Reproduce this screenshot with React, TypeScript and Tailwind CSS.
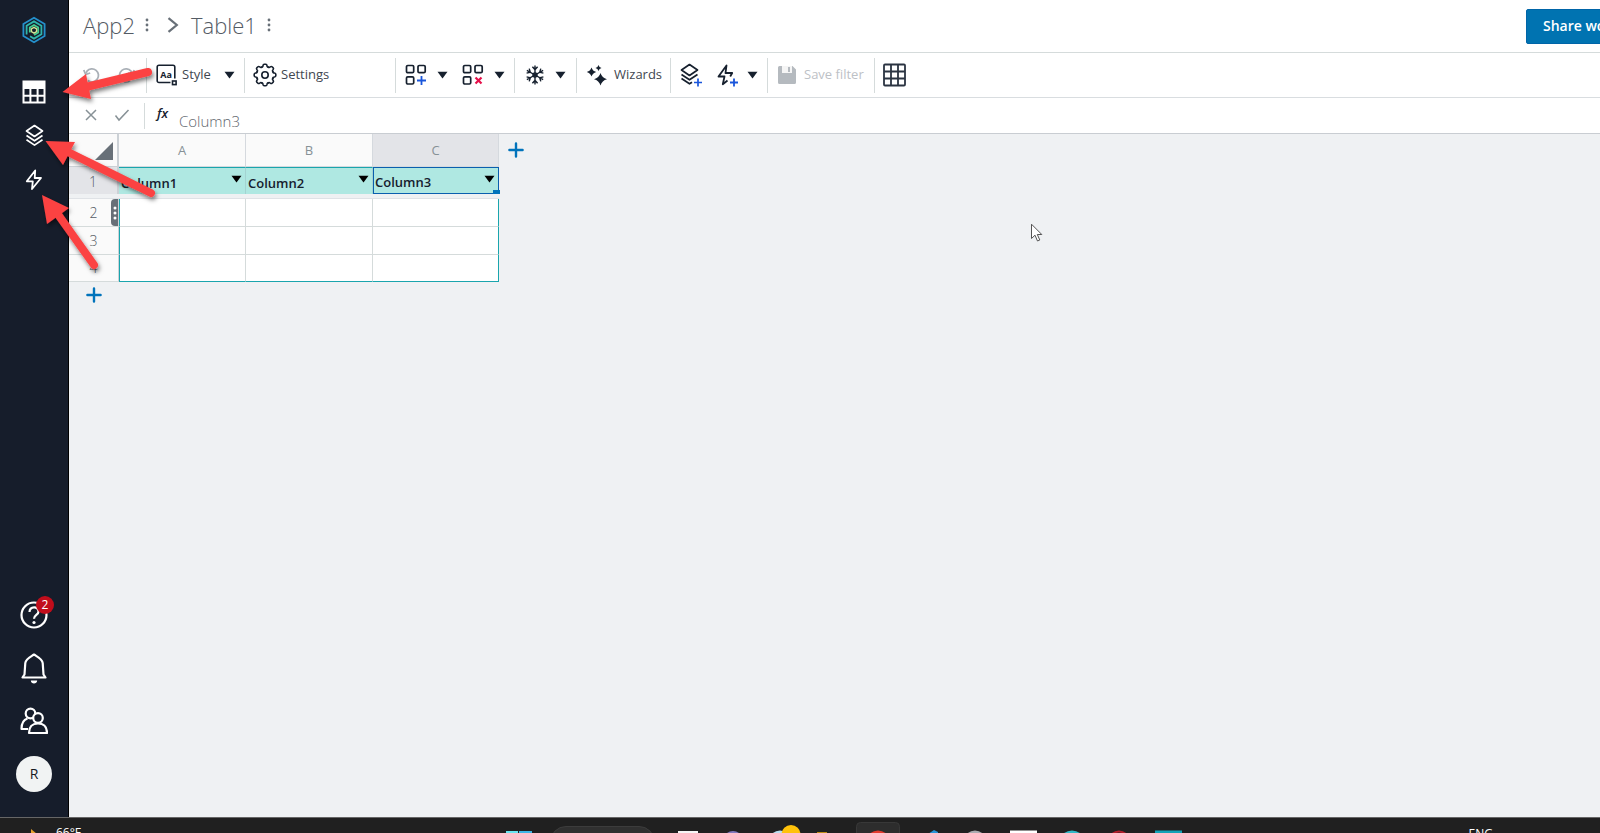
import type { ReactNode } from 'react';

const columns = [
  { letter: 'A', name: 'Column1' },
  { letter: 'B', name: 'Column2' },
  { letter: 'C', name: 'Column3' },
];

const rows = [2, 3, 4];

function Caret() {
  return (
    <svg width="11" height="8" viewBox="0 0 11 8" aria-hidden="true">
      <path d="M0.5 0.8h10L5.5 7.5z" fill="currentColor" />
    </svg>
  );
}

function Dots({ label }: { label: string }) {
  return (
    <button aria-label={label} className="flex w-4 justify-center text-[#687078]">
      <svg width="4" height="14" viewBox="0 0 4 14" fill="currentColor">
        <circle cx="2" cy="2" r="1.4" />
        <circle cx="2" cy="7" r="1.4" />
        <circle cx="2" cy="12" r="1.4" />
      </svg>
    </button>
  );
}

function Plus() {
  return (
    <svg width="16" height="16" viewBox="0 0 16 16" stroke="#0073bb" strokeWidth="2.4" strokeLinecap="round">
      <path d="M8 1.4v13.2M1.4 8h13.2" />
    </svg>
  );
}

function Logo() {
  return (
    <svg width="26" height="28" viewBox="0 0 26 28" fill="none" strokeWidth="1.8">
      <path d="M13 1.8l10.6 6.1v12.2L13 26.2 2.4 20.1V7.9z" stroke="#2490cc" />
      <path d="M5.6 18.5V9.7L13 5.4l7.4 4.3v8.6L13 22.6l-4-2.3" stroke="#2fb5ac" />
      <path d="M8.8 16.5v-4.9L13 9.1l4.2 2.5v4.9L13 19" stroke="#45cf92" />
      <path d="M13 11.3l2.6 1.5v2.9L13 17.2l-2.6-1.5v-2.9z" stroke="#d3e394" strokeWidth="1.4" />
    </svg>
  );
}

function TablesIcon() {
  return (
    <svg width="24" height="24" viewBox="0 0 24 24" fill="none" stroke="#fff" strokeWidth="2">
      <path d="M1.5 1.5h21v21h-21z" />
      <path d="M1 1h22v8H1z" fill="#fff" stroke="none" />
      <path d="M1 15.8h22M8.4 8v14M15.6 8v14" />
    </svg>
  );
}

function LayersIcon({ plus = false }: { plus?: boolean }) {
  return (
    <svg width="24" height="24" viewBox="0 0 24 24" fill="none" stroke="currentColor" strokeWidth="1.7" strokeLinejoin="round">
      <path d="M10.5 1.5l8 5.5-8 5.5-8-5.5z" />
      <path d="M2.5 11.5l8 5.3 8-5.3" />
      <path d={plus ? 'M2.5 15.5l8 5.3 2.5-1.6' : 'M2.5 15.8l8 5.3 8-5.3'} />
      {plus && <path d="M19 15.5v8M15 19.5h8" stroke="#1a56db" />}
    </svg>
  );
}

function BoltIcon({ plus = false }: { plus?: boolean }) {
  return (
    <svg width="24" height="24" viewBox="0 0 24 24" fill="none" stroke="currentColor" strokeWidth="1.8" strokeLinejoin="round">
      {plus ? (
        <>
          <path d="M12.5 17.5l-4.7 3.7 1.7-7.7h-6L11.5 2.5l-1 7.5h6.7l-2 3.5" />
          <path d="M19 15.5v8M15 19.5h8" stroke="#1a56db" />
        </>
      ) : (
        <path d="M13.2 2.5L4.8 13.3h6L10 21l9-11h-6.3z" />
      )}
    </svg>
  );
}

function HelpIcon() {
  return (
    <svg width="28" height="28" viewBox="0 0 28 28" fill="none" stroke="#fff" strokeWidth="2.2">
      <circle cx="14" cy="14" r="12.5" />
      <path d="M9.5 11c.2-6 9-6 9-.6 0 3.6-4.5 3.4-4.5 7.4" />
      <circle cx="14" cy="21.5" r="1.6" fill="#fff" stroke="none" />
    </svg>
  );
}

function BellIcon() {
  return (
    <svg width="28" height="34" viewBox="0 0 28 34" fill="none" stroke="#fff" strokeWidth="2.2" strokeLinejoin="round">
      <path d="M2.5 26.5l2-3 .8-11.5c.4-4 4-5.500 8.700-8.500 4.700 3 8.300 4.500 8.700 8.500l.8 11.500 2 3z" />
      <path d="M10.8 29.5h6.400c0 4-6.400 4-6.400 0z" fill="#fff" stroke="none" />
    </svg>
  );
}

function PeopleIcon() {
  return (
    <svg width="28" height="28" viewBox="0 0 28 28" fill="none" stroke="#fff" strokeWidth="2.2" strokeLinejoin="round">
      <circle cx="10.5" cy="6.5" r="4.8" />
      <path d="M8 22H1.5c0-5 1-9 6-10.5" />
      <circle cx="18" cy="11" r="4.8" fill="#161d2b" />
      <path d="M9 26c0-6 3-9.5 9-9.5s9 3.500 9 9.500z" fill="#161d2b" />
    </svg>
  );
}

function CellsIcon({ remove = false }: { remove?: boolean }) {
  return (
    <svg width="22" height="22" viewBox="0 0 22 22" fill="none" stroke="currentColor" strokeWidth="1.7">
      <rect x="1.5" y="1.5" width="7.2" height="7.2" rx="1.3" />
      <rect x="13" y="1.5" width="7.2" height="7.2" rx="1.3" />
      <rect x="1.5" y="12.8" width="7.2" height="7.2" rx="1.3" />
      {remove ? (
        <path d="M13.5 13.5l6 6M19.5 13.5l-6 6" stroke="#e5104a" strokeWidth="2.2" />
      ) : (
        <path d="M16.5 12v9M12 16.5h9" stroke="#1a56db" strokeWidth="1.8" />
      )}
    </svg>
  );
}

function StyleIcon() {
  return (
    <svg width="22" height="22" viewBox="0 0 22 22" fill="none" stroke="currentColor" strokeWidth="1.6">
      <path d="M14.5 18.5H3a1.8 1.8 0 0 1-1.8-1.8V3A1.8 1.8 0 0 1 3 1.2h14A1.8 1.8 0 0 1 18.8 3v11.5" />
      <rect x="16.5" y="17" width="3.6" height="3.6" />
      <text x="10" y="14" textAnchor="middle" fontSize="9" fontWeight="700" fill="currentColor" stroke="none">Aa</text>
    </svg>
  );
}

function GearIcon() {
  // One rounded tooth, repeated around the rim
  const teeth = [0, 45, 90, 135, 180, 225, 270, 315];
  return (
    <svg width="24" height="24" viewBox="0 0 24 24" fill="none" stroke="currentColor" strokeWidth="1.6" strokeLinecap="round" strokeLinejoin="round">
      <circle cx="12" cy="12" r="3.2" />
      {teeth.map((angle) => (
        <path
          key={angle}
          d="M8.7 4.05Q9.9 4.3 10 2.6 10.2 1.2 11.2 1.2H12.8Q13.8 1.2 14 2.6 14.1 4.3 15.3 4.05"
          transform={`rotate(${angle} 12 12)`}
        />
      ))}
    </svg>
  );
}

function FreezeIcon() {
  return (
    <svg width="20" height="20" viewBox="0 0 20 20" fill="none" stroke="currentColor" strokeWidth="1.4">
      {[0, 60, 120, 180, 240, 300].map((angle) => (
        <path key={angle} d="M10 10V0.6M7.4 1.8L10 4.6l2.6-2.8" transform={`rotate(${angle} 10 10)`} />
      ))}
      <circle cx="10" cy="10" r="2" />
    </svg>
  );
}

function SparkleIcon() {
  return (
    <svg width="22" height="22" viewBox="0 0 22 22" fill="currentColor">
      <path d="M14.5 9Q16 14 21 15.2 16 16.400 14.500 21.400 13 16.400 8 15.200 13 14 14.500 9z" />
      <path d="M5.5 3.5Q6.6 7 10.2 8 6.600 9 5.500 12.500 4.400 9 .8 8 4.400 7 5.500 3.500z" />
      <path d="M12.5 1Q13.1 3.4 15.5 4 13.100 4.600 12.500 7 11.900 4.600 9.500 4 11.900 3.400 12.500 1z" />
    </svg>
  );
}

function UndoIcon({ flip = false }: { flip?: boolean }) {
  return (
    <svg width="18" height="18" viewBox="0 0 18 18" fill="none" stroke="#aab0b7" strokeWidth="1.8">
      <g transform={flip ? 'translate(18 0) scale(-1 1)' : undefined}>
        <path d="M5 14.5A6.500 6.500 0 1 0 4 5.200L3 7.500" />
        <path d="M.8 4l1.900 4.500 4.500-1.500" />
      </g>
    </svg>
  );
}

function ToolGroup({ className = '', children }: { className?: string; children: ReactNode }) {
  return <div className={`flex h-[35px] shrink-0 items-center border-r border-[#d5dbdb] ${className}`}>{children}</div>;
}

function Sidebar() {
  return (
    <nav className="flex w-[69px] shrink-0 flex-col items-center border-r border-black bg-[#161d2b] pt-4 pb-[25px] text-white">
      <a href="#home" aria-label="Home"><Logo /></a>
      <div className="mt-9 flex flex-col items-center gap-5">
        <a href="#tables" aria-label="Tables"><TablesIcon /></a>
        <a href="#builder" aria-label="Builder" className="pl-1"><LayersIcon /></a>
        <a href="#automations" aria-label="Automations"><BoltIcon /></a>
      </div>
      <div className="mt-auto flex flex-col items-center gap-[17px]">
        <button aria-label="Help" className="relative flex size-9 items-center justify-center">
          <HelpIcon />
          <span className="absolute -top-px -right-0.5 flex size-[18px] items-center justify-center rounded-full bg-[#c10d1b] text-xs">2</span>
        </button>
        <button aria-label="Notifications" className="flex size-9 items-center justify-center"><BellIcon /></button>
        <button aria-label="Team" className="flex size-9 items-center justify-center"><PeopleIcon /></button>
        <button className="flex size-9 items-center justify-center rounded-full bg-[#f1f3f3] text-sm text-[#16191f]">R</button>
      </div>
    </nav>
  );
}

function Header() {
  return (
    <header className="flex h-[53px] items-center border-b border-[#d5dbdb] bg-white pb-0.5 pl-3.5 text-[22px] font-light text-[#545b64]">
      <h1>App2</h1>
      <span className="ml-1 flex"><Dots label="App menu" /></span>
      <svg className="mx-3" width="12" height="16" viewBox="0 0 12 16" fill="none" stroke="#687078" strokeWidth="2.2">
        <path d="M1.5 1.2L9.8 8l-8.3 6.8" />
      </svg>
      <h2>Table1</h2>
      <span className="ml-1 flex"><Dots label="Table menu" /></span>
      <div className="ml-auto w-[74px] overflow-hidden">
        <button className="h-[35px] rounded-xs border border-[#0065a8] bg-[#0073b1] px-4 text-sm font-semibold whitespace-nowrap text-white">
          Share workbook
        </button>
      </div>
    </header>
  );
}

function Toolbar() {
  return (
    <div className="flex h-[45px] items-center border-b border-[#d9dde0] bg-white text-[13px] text-[#414750]">
      <ToolGroup className="w-[78px] gap-4 pl-3.5">
        <button aria-label="Undo"><UndoIcon /></button>
        <button aria-label="Redo"><UndoIcon flip /></button>
      </ToolGroup>
      <ToolGroup className="w-[98px] pl-[9px]">
        <button className="flex items-center">
          <span className="text-[#16202e]"><StyleIcon /></span>
          <span className="ml-1 w-10 text-left">Style</span>
          <span className="ml-0.5 text-[#16202e]"><Caret /></span>
        </button>
      </ToolGroup>
      <ToolGroup className="w-[151px] pl-2">
        <button className="flex items-center gap-1">
          <span className="text-[#16202e]"><GearIcon /></span>
          Settings
        </button>
      </ToolGroup>
      <ToolGroup className="w-[119px] gap-3.5 pl-[9px] text-[#16202e]">
        <button aria-label="Add cells" className="flex items-center gap-2.5"><CellsIcon /><Caret /></button>
        <button aria-label="Delete cells" className="flex items-center gap-2.5"><CellsIcon remove /><Caret /></button>
      </ToolGroup>
      <ToolGroup className="w-[62px] pl-2.5 text-[#16202e]">
        <button aria-label="Freeze" className="flex items-center gap-2.5"><FreezeIcon /><Caret /></button>
      </ToolGroup>
      <ToolGroup className="w-[94px] pl-[9px]">
        <button className="flex items-center gap-1.5">
          <span className="text-[#16202e]"><SparkleIcon /></span>
          Wizards
        </button>
      </ToolGroup>
      <ToolGroup className="w-[97px] gap-3 pl-2 text-[#16202e]">
        <button aria-label="Add app"><LayersIcon plus /></button>
        <button aria-label="Add automation" className="flex items-center gap-2"><BoltIcon plus /><Caret /></button>
      </ToolGroup>
      <ToolGroup className="w-[107px] pl-2.5 text-[#bdc1c6]">
        <button disabled className="flex items-center gap-2">
          <svg width="18" height="20" viewBox="0 0 18 20">
            <path d="M1.5 1h13L18 4.5v13a1.5 1.5 0 0 1-1.500 1.500h-15A1.500 1.500 0 0 1 0 17.500v-15A1.500 1.500 0 0 1 1.500 1z" fill="#b5babf" />
            <path d="M4 1h10v7H4z" fill="#f5f5f5" />
            <path d="M10 2h2v5h-2z" fill="#b5babf" />
          </svg>
          Save filter
        </button>
      </ToolGroup>
      <button aria-label="Grid view" className="ml-2 text-[#2b3442]">
        <svg width="24" height="24" viewBox="0 0 24 24" fill="none" stroke="currentColor" strokeWidth="1.8">
          <rect x="1" y="1.5" width="21" height="21" rx="1" />
          <path d="M8 1.5v21M15 1.5v21M1 8.5H22M1 15.5H22" />
        </svg>
      </button>
    </div>
  );
}

function FormulaBar() {
  return (
    <div className="flex h-9 items-center border-b border-[#c9cdd2] bg-white">
      <div className="flex h-[26px] w-[76px] items-center gap-4 border-r border-[#d5dbdb] pl-[15px]">
        <button aria-label="Cancel">
          <svg width="14" height="14" viewBox="0 0 14 14" stroke="#879196" strokeWidth="1.5"><path d="M2 1l10 10M12 1L2 11" /></svg>
        </button>
        <button aria-label="Accept">
          <svg width="16" height="14" viewBox="0 0 16 14" fill="none" stroke="#879196" strokeWidth="1.5"><path d="M1.5 6.5L5 11 14.5 1" /></svg>
        </button>
      </div>
      <label htmlFor="formula" className="mb-1 ml-3 w-[22px] text-[13px] font-semibold text-[#16202e] italic">fx</label>
      <input id="formula" defaultValue="Column3" className="mt-2.5 h-6 min-w-0 flex-1 bg-transparent text-[15px] font-light text-[#5f666e] outline-none" />
    </div>
  );
}

function Sheet() {
  return (
    <div className="flex items-start">
      <div className="flex flex-col">
        <table className="w-[430px] table-fixed border-separate border-spacing-0 bg-white text-sm">
          <colgroup>
            <col className="w-[50px]" />
            <col />
            <col className="w-[127px]" />
            <col className="w-[126px]" />
          </colgroup>
          <thead>
            <tr className="h-[33px] text-[13px] text-[#879196]">
              <th className="border-r-2 border-b border-[#ccd1d6] bg-[#fafafa] p-0">
                <svg className="mt-0.5 mr-1 ml-auto" width="18" height="18" viewBox="0 0 18 18"><path d="M18 0v18H0z" fill="#687078" /></svg>
              </th>
              {columns.map((col) => (
                <th
                  key={col.letter}
                  scope="col"
                  className={`border-r border-b border-[#d5d9de] p-0 font-normal ${col.letter === 'C' ? 'bg-[#e3e4e8]' : 'bg-[#fafafa]'}`}
                >
                  {col.letter}
                </th>
              ))}
            </tr>
          </thead>
          <tbody>
            <tr className="h-[27px]">
              <th scope="row" className="border-r-2 border-[#ccd1d6] bg-[#e3e4e8] p-0 pt-0.5 font-light text-[#545b64]">1</th>
              {columns.map((col) => (
                <td
                  key={col.letter}
                  className={`relative bg-[#afe8e2] p-0 ${
                    col.letter === 'C' ? 'border border-[#0a5fae]' : 'border-t border-r border-t-[#1aa5ad] border-r-[#a3d3d1]'
                  }`}
                >
                  <div className={`flex items-center justify-between pr-[3px] text-black ${col.letter === 'C' ? 'pl-px' : 'pl-0.5'}`}>
                    <span className="pt-1 text-[13px] font-semibold text-[#16202e]">{col.name}</span>
                    <button aria-label={`Filter ${col.name}`} className="mb-1"><Caret /></button>
                  </div>
                  {col.letter === 'C' && <span className="absolute -right-0.5 -bottom-px h-1 w-[7px] bg-[#0073bb]" />}
                </td>
              ))}
            </tr>
            <tr className="h-[5px]">
              <td colSpan={4} className="border-b border-[#dfe2e6] bg-[#eff1f3] p-0" />
            </tr>
            {rows.map((row) => (
              <tr key={row} className={row === 4 ? 'h-[27px]' : 'h-7'}>
                <th scope="row" className="relative border-r border-b border-r-[#ccd1d6] border-b-[#d5dbdb] bg-[#fafafa] p-0 font-light text-[#545b64]">
                  {row}
                  {row === 2 && (
                    <button aria-label="Row menu" className="absolute top-0 right-0 flex h-[27px] w-[7px] items-center justify-center rounded-l bg-[#687078]">
                      <svg width="4" height="14" viewBox="0 0 4 14" fill="#fff">
                        <circle cx="2" cy="2" r="1.5" />
                        <circle cx="2" cy="7" r="1.5" />
                        <circle cx="2" cy="12" r="1.5" />
                      </svg>
                    </button>
                  )}
                </th>
                {columns.map((col) => (
                  <td
                    key={col.letter}
                    className={`p-0 ${col.letter === 'A' ? 'border-l border-l-[#1aa5ad]' : ''} border-r border-b ${
                      col.letter === 'C' ? 'border-r-[#1aa5ad]' : 'border-r-[#d5dbdb]'
                    } ${row === 4 ? 'border-b-[#1aa5ad]' : 'border-b-[#d5dbdb]'}`}
                  />
                ))}
              </tr>
            ))}
          </tbody>
        </table>
        <button aria-label="Add row" className="mt-[5px] ml-[17px] w-4"><Plus /></button>
      </div>
      <button aria-label="Add column" className="mt-2 ml-[9px]"><Plus /></button>
    </div>
  );
}

function TaskButton({ label, active = false, children }: { label: string; active?: boolean; children: ReactNode }) {
  return (
    <button aria-label={label} className="h-full w-12 shrink-0">
      <svg width="48" height="16" viewBox="0 0 48 16">
        {active && <rect x="0.5" y="4.5" width="43" height="40" rx="4" fill="#2d2d2d" stroke="#383838" />}
        {children}
      </svg>
    </button>
  );
}

function Taskbar() {
  return (
    <footer className="flex h-4 shrink-0 overflow-hidden border-t border-[#666] bg-[#202020] text-xs text-white">
      <div className="flex w-[495px] shrink-0 pl-[30px]">
        <svg className="shrink-0" width="26" height="16" viewBox="0 0 26 16"><path d="M1 11l6 5H1z" fill="#e6a12d" /></svg>
        <span className="pt-[7px]">66°F</span>
      </div>
      <TaskButton label="Start">
        <path d="M11 13h12v3H11z" fill="#69e4f0" />
        <path d="M24 13h13v3H24z" fill="#3fb6e6" />
      </TaskButton>
      <div className="mt-2 mr-[9px] ml-[7px] h-8 w-[105px] shrink-0 rounded-full border border-[#3c3c3c] bg-[#303030]" />
      <TaskButton label="Task view"><path d="M14 13h20v3H14z" fill="#f5f5f5" /></TaskButton>
      <TaskButton label="Chat"><circle cx="21" cy="23" r="10" fill="#8078bd" /></TaskButton>
      <TaskButton label="Browser">
        <circle cx="20" cy="24" r="11.5" fill="#b9dff0" />
        <circle cx="31" cy="16.5" r="9.5" fill="#ffc20a" />
      </TaskButton>
      <TaskButton label="Files"><path d="M9 14h10v2H9z" fill="#bd8a12" /></TaskButton>
      <TaskButton label="Chrome" active><circle cx="22" cy="25" r="12.5" fill="#e33b2e" /></TaskButton>
      <TaskButton label="Code"><path d="M24 16l6-4 4 2v2z" fill="#2a93d6" /></TaskButton>
      <TaskButton label="Settings"><circle cx="23" cy="24" r="11.5" fill="#a9abb0" /></TaskButton>
      <TaskButton label="Notes"><path d="M10 12.5h27V16H10z" fill="#fff" /></TaskButton>
      <TaskButton label="Edge"><circle cx="24" cy="26" r="13.5" fill="#31b9c8" /></TaskButton>
      <TaskButton label="Recorder"><circle cx="23" cy="24" r="10.5" fill="none" stroke="#b51f2b" strokeWidth="2" /></TaskButton>
      <TaskButton label="Capture"><path d="M11 12.5h27V16H11z" fill="#12a3b8" /></TaskButton>
      <span className="mr-[107px] ml-auto pt-2">ENG</span>
    </footer>
  );
}

function Arrows() {
  return (
    <svg className="pointer-events-none absolute top-0 left-0" width="170" height="290" viewBox="0 0 170 290" aria-hidden="true">
      <defs>
        <filter id="shadow" x="-20%" y="-20%" width="140%" height="150%">
          <feDropShadow dx="1.5" dy="3" stdDeviation="2" floodColor="#000" floodOpacity="0.5" />
        </filter>
      </defs>
      <g fill="#fb4343" stroke="#fb4343" filter="url(#shadow)">
        <path d="M148 72L86 87M151 193L68 152M94 265L57 213" strokeWidth="8" strokeLinecap="round" />
        <path d="M62.5 92l23.5-18 5 25zM45.5 141l29.5 1-12 23zM42 195l27 13-22 16z" stroke="none" />
      </g>
    </svg>
  );
}

export default function App() {
  return (
    <div className="relative flex h-screen flex-col overflow-hidden bg-[#eff1f3] font-['Open_Sans','Noto_Sans',sans-serif]">
      <div className="flex min-h-0 flex-1">
        <Sidebar />
        <main className="min-w-0 flex-1">
          <Header />
          <Toolbar />
          <FormulaBar />
          <Sheet />
        </main>
      </div>
      <Taskbar />
      <Arrows />
      {/* Mouse pointer */}
      <svg className="pointer-events-none absolute top-[223px] left-[1030px]" width="14" height="20" viewBox="0 0 14 20" aria-hidden="true">
        <path d="M1.5 1.2v14.3l3.5-3.3 2.5 5.8 2.3-1-2.5-5.5h4.500z" fill="#fff" stroke="#555" />
      </svg>
    </div>
  );
}
